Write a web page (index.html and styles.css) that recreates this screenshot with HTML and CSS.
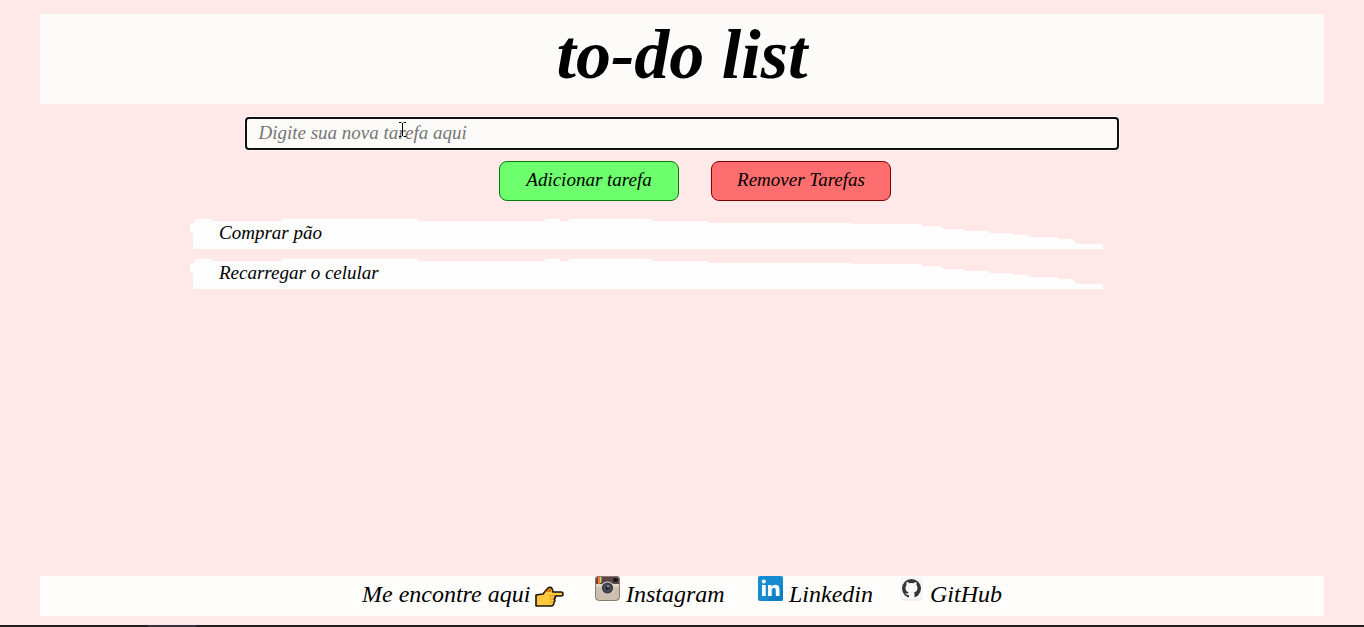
FILE: index.html
```html
<!DOCTYPE html>
<html lang="pt-BR">
<head>
<meta charset="utf-8">
<meta name="viewport" content="width=device-width, initial-scale=1">
<title>to-do list</title>
<link rel="stylesheet" href="styles.css">
</head>
<body>
<svg class="defs" aria-hidden="true">
  <symbol id="brush" viewBox="0 0 914 30" preserveAspectRatio="none">
    <path d="M3 30V15L0 12V5L4 4L6 0H22V2H92V0H228V2H355V0H370V2H379V0H462V2H518V4H663V5H732V7H750L754 10H774V12H799V14H823V16H839V18H868V20H882L887 25H913V29H914V30Z"/>
  </symbol>
</svg>
<header class="header">
  <h1 class="title">to-do list</h1>
</header>
<main class="main">
  <form class="form">
    <div class="field">
      <input class="task-input" type="text" aria-label="Nova tarefa" placeholder="Digite sua nova tarefa aqui">
      <svg class="caret" viewBox="0 0 9 17" aria-hidden="true"><path d="M1 1.500H3.500M5.500 1.500H8M4.500 2V15M1 15.500H3.500M5.500 15.500H8"/></svg>
    </div>
    <div class="actions">
      <button class="button add" type="button">Adicionar tarefa</button>
      <button class="button remove" type="button">Remover Tarefas</button>
    </div>
  </form>
  <ul class="tasks">
    <li class="task"><svg class="stroke" aria-hidden="true"><use href="#brush"/></svg><span class="task-text">Comprar pão</span></li>
    <li class="task"><svg class="stroke" aria-hidden="true"><use href="#brush"/></svg><span class="task-text">Recarregar o celular</span></li>
  </ul>
</main>
<footer class="footer">
  <p class="contact">Me encontre aqui
    <svg class="hand" viewBox="0 0 29 22" aria-hidden="true">
      <path d="M1 9L8 8L12 3Q15 0 17 2.500L18 6H26Q28 6 28 8Q28 10 26 10H20Q21 12 19 13Q21 15 19 16Q19 20 16 20H1Z" fill="#ffc83d" stroke="#17130f" stroke-width="1.600" stroke-linejoin="round"/>
      <path d="M10 6L13 3Q15 1 16.500 3.500L16 6Z" fill="#d67d00"/>
      <path d="M14 10H20M15 13H19M15 16H19" stroke="#d68b19" fill="none"/>
    </svg>
  </p>
  <a class="link instagram" href="#instagram">
    <svg class="icon" viewBox="0 0 25 25" aria-hidden="true">
      <defs><clipPath id="camera"><rect width="25" height="25" rx="4"/></clipPath></defs>
      <g clip-path="url(#camera)">
        <path fill="#cdbfaf" d="M0 0H25V25H0Z"/>
        <path fill="#5b4548" d="M0 0H25V8H0Z"/>
        <path fill="#8c3d2d" d="M2 0H3V7H2Z"/><path fill="#ee7b27" d="M3 0H5V8H3Z"/><path fill="#f3c550" d="M5 0H6V7H5Z"/><path fill="#6b8f99" d="M6 0H7V6H6Z"/>
        <path fill="#ded5c9" d="M0 8H7V11H0ZM18 8H25V11H18Z"/>
      </g>
      <rect x=".5" y=".5" width="24" height="24" rx="4" fill="none" stroke="#8d7b70"/>
      <rect x="18" y="2" width="5" height="4" rx="2" fill="#191619"/>
      <circle cx="12.500" cy="12" r="6.600" fill="#d2ccc7"/>
      <circle cx="12.500" cy="12" r="5.600" fill="#3c3d44"/>
      <circle cx="12.500" cy="12" r="3.400" fill="#555a66"/>
      <circle cx="12.500" cy="12" r="2.200" fill="#20232b"/>
      <circle cx="13" cy="10.500" r="1" fill="#aab1bc"/>
    </svg>
    <span>Instagram</span>
  </a>
  <a class="link linkedin" href="#linkedin">
    <svg class="icon" viewBox="0 0 25 25" aria-hidden="true">
      <rect width="25" height="25" rx="2" fill="#168bcf"/>
      <path d="M25 8V23Q25 25 23 25H9Z" fill="#0e80c3"/>
      <circle cx="5.800" cy="5.500" r="2" fill="#fff"/>
      <path d="M4 9H7.700V20H4ZM10 9H13.500V10.500Q15 8.700 17.200 8.700Q21.500 8.700 21.500 13.500V20H17.800V14Q17.800 11.800 16 11.800Q13.700 11.800 13.700 14.300V20H10Z" fill="#fff"/>
    </svg>
    <span>Linkedin</span>
  </a>
  <a class="link github" href="#github">
    <svg class="icon" viewBox="0 0 25 25" aria-hidden="true">
      <rect x="1" y="1" width="23" height="23" rx="4" fill="#f7f5f5"/>
      <path d="M2 22Q3 24 6 24H20Q23 24 23 22" fill="none" stroke="#e6e2e2"/>
      <circle cx="12.500" cy="12.500" r="9.500" fill="#34363a"/>
      <path d="M10 23V19Q7 19.500 6 17Q8 18 8.500 17.500Q9 16.500 10 16.500Q6.500 15.500 6.500 12Q6.500 10 7.600 9Q7.100 7.500 7.700 6Q9 6 10.500 7.200Q12.500 6.800 14.500 7.200Q16 6 17.300 6Q17.900 7.500 17.400 9Q18.500 10.300 18.500 12Q18.500 15.500 15 16.500Q15.500 17 15.500 18V23Z" fill="#f9f8f8"/>
    </svg>
    <span>GitHub</span>
  </a>
</footer>
<div class="edge"><div class="edge-tab"></div></div>
</body>
</html>
```
FILE: styles.css
```css
* { box-sizing: border-box; }
body {
  margin: 0;
  min-height: 100vh;
  padding-top: 14px;
  display: flex;
  flex-direction: column;
  background: #ffe8e8;
  color: #000;
  font-family: Satisfy, "Liberation Serif", cursive;
  font-style: italic;
  font-size: 19px;
}
.defs { display: none; }
.header {
  margin: 0 40px;
  padding: 1px 0 9px;
  background: #fcfbf9;
  text-align: center;
}
.title {
  margin: 0;
  font-size: 70px;
  line-height: 80px;
  font-weight: bold;
}
.form {
  display: flex;
  flex-direction: column;
  align-items: center;
  gap: 11px;
  padding: 13px 40px 0;
}
.field { position: relative; width: 68%; }
.task-input {
  display: block;
  width: 100%;
  height: 33px;
  padding: 0 11px 2px;
  border: 2px solid #101010;
  border-radius: 4px;
  outline: none;
  box-shadow: 0 0 0 1px #fff6f6;
  background: #fcfbf9;
  font: inherit;
}
.task-input::placeholder { color: #757575; opacity: 1; }
.caret {
  position: absolute;
  left: 153px;
  top: 4px;
  width: 9px;
  height: 17px;
  fill: none;
  stroke: #000;
  pointer-events: none;
}
.actions {
  display: flex;
  gap: 32px;
  padding-left: 26px;
}
.button {
  width: 180px;
  height: 40px;
  padding: 0 0 2px;
  border: 1px solid;
  border-radius: 8px;
  color: #000;
  font: inherit;
  cursor: pointer;
}
.add { background: #6eff6e; border-color: #087808; }
.remove { background: #ff6e6e; border-color: #800000; }
.tasks {
  width: 67%;
  margin: 18px 0 0 190px;
  padding: 0;
  display: grid;
  gap: 10px;
  list-style: none;
}
.task {
  position: relative;
  padding: 0 29px 2px;
  line-height: 28px;
}
.stroke {
  position: absolute;
  inset: 0;
  width: 100%;
  height: 100%;
  fill: #fdfdfd;
}
.task-text { position: relative; }
.footer {
  margin: auto 40px 9px;
  min-height: 40px;
  display: flex;
  justify-content: center;
  background: #fefdfb;
  font-size: 24px;
  line-height: 36px;
}
.contact {
  width: 233px;
  margin: 0;
  display: flex;
  gap: 5px;
}
.hand { width: 29px; height: 22px; margin-top: 10px; }
.link {
  display: flex;
  gap: 6px;
  color: inherit;
  text-decoration: none;
}
.icon { flex: none; width: 25px; height: 25px; }
.instagram { width: 163px; }
.linkedin { width: 141px; }
.github { width: 103px; }
.edge { height: 2px; background: #241e20; }
.edge-tab { height: 2px; width: 48px; margin-left: 148px; background: #35323a; }
```
